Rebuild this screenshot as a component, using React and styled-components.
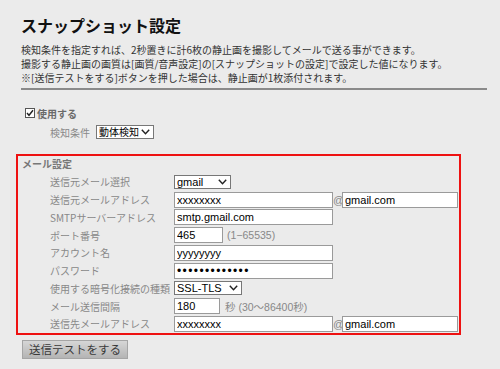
import React from "react";
import styled, { createGlobalStyle } from "styled-components";

const Global = createGlobalStyle`
  html, body { margin: 0; padding: 0; background: #ebebeb; }
  body { font-family: "Noto Sans CJK JP", "Liberation Sans", sans-serif; }
  * { box-sizing: border-box; }
`;

const Page = styled.div`
  width: 500px;
  height: 369px;
  padding: 15px 13px 0 21px;
  overflow: hidden;
`;

const Title = styled.h1`
  margin: 0;
  font-size: 16px;
  line-height: 20px;
  font-weight: 700;
  color: #111;
`;

const Desc = styled.div`
  margin-top: 8px;
  padding-bottom: 3px;
  border-bottom: 2px solid #8a8a8a;
  font-size: 10px;
  line-height: 14px;
  color: #333;
  white-space: nowrap;
`;

const CheckRow = styled.label`
  margin-top: 16px;
  display: flex;
  align-items: center;
  gap: 2px;
  height: 14px;
  padding-left: 4px;
  font-size: 10px;
  font-weight: 700;
  color: #6a6a6a;
`;

const Box = styled.span`
  width: 10px;
  height: 10px;
  border: 1px solid #555;
  background: #fff;
  display: inline-flex;
  align-items: center;
  justify-content: center;
`;

const DetectRow = styled.div`
  margin-top: 4px;
  display: flex;
  align-items: center;
  height: 16px;
  padding-left: 29px;
  gap: 6px;
`;

const Label = styled.span`
  font-size: 10px;
  color: #888;
  white-space: nowrap;
  width: ${(p) => p.$w || "auto"};
  flex: none;
`;

const Section = styled.div`
  margin: 14px 0 0 -5px;
  width: 445px;
  border: 2px solid #ee1111;
  padding: 1px 0 0 4px;
`;

const SectionTitle = styled.div`
  font-size: 10px;
  line-height: 14px;
  font-weight: 700;
  color: #777;
`;

const Rows = styled.div`
  margin-top: 2px;
  display: flex;
  flex-direction: column;
`;

const Row = styled.div`
  height: 17.75px;
  display: flex;
  align-items: center;
  padding-left: 28px;
`;

const Input = styled.input`
  height: 16px;
  width: ${(p) => p.$w}px;
  border: 1px solid #9a9a9a;
  background: #fff;
  padding: 0 2px;
  font-family: "Liberation Sans", Arial, sans-serif;
  font-size: 11px;
  color: #000;
  outline: none;
  flex: none;
  &[type="password"] {
    font-size: 12px;
    letter-spacing: 1.4px;
  }
`;

const SelectWrap = styled.span`
  position: relative;
  display: inline-flex;
  flex: none;
`;

const Select = styled.select`
  appearance: none;
  -webkit-appearance: none;
  height: ${(p) => p.$h || 14}px;
  width: ${(p) => p.$w}px;
  border: 1px solid #777;
  border-radius: 0;
  background: #fff;
  padding: 0 0 0 2px;
  font-family: ${(p) => (p.$cjk ? '"Noto Sans CJK JP", sans-serif' : '"Liberation Sans", Arial, sans-serif')};
  font-size: ${(p) => (p.$cjk ? 10 : 11)}px;
  line-height: 12px;
  color: #000;
  outline: none;
`;

const Chevron = styled.svg`
  position: absolute;
  right: 4px;
  top: 50%;
  transform: translateY(-50%);
  pointer-events: none;
`;

const At = styled.span`
  font-family: "Liberation Sans", Arial, sans-serif;
  font-size: 11px;
  color: #888;
  width: 9px;
  text-align: center;
  flex: none;
`;

const Hint = styled.span`
  margin-left: ${(p) => p.$ml || 4}px;
  font-family: "Liberation Sans", "Noto Sans CJK JP", sans-serif;
  font-size: 10.5px;
  color: #888;
  white-space: nowrap;
`;

const Button = styled.button`
  margin: 3px 0 0 1px;
  width: 106px;
  height: 19px;
  border: 1px solid #a5a5a5;
  border-radius: 0;
  background: linear-gradient(#d6d6d6, #b4b4b4);
  font-family: "Noto Sans CJK JP", sans-serif;
  font-size: 11.5px;
  line-height: 17px;
  color: #3a3a3a;
  padding: 0;
`;

const Dropdown = ({ w, h, cjk, value, options }) => (
  <SelectWrap>
    <Select $w={w} $h={h} $cjk={cjk} defaultValue={value}>
      {options.map((o) => (
        <option key={o}>{o}</option>
      ))}
    </Select>
    <Chevron width="9" height="6" viewBox="0 0 9 6">
      <path d="M0.8 0.8 L4.5 4.8 L8.2 0.8" fill="none" stroke="#222" strokeWidth="1.4" />
    </Chevron>
  </SelectWrap>
);

export default function App() {
  return (
    <Page>
      <Global />
      <Title>スナップショット設定</Title>
      <Desc>
        <div>検知条件を指定すれば、2秒置きに計6枚の静止画を撮影してメールで送る事ができます。</div>
        <div>撮影する静止画の画質は[画質/音声設定]の[スナップショットの設定]で設定した値になります。</div>
        <div>※[送信テストをする]ボタンを押した場合は、静止画が1枚添付されます。</div>
      </Desc>
      <CheckRow>
        <Box>
          <svg width="8" height="8" viewBox="0 0 8 8">
            <path d="M1 4 L3 6.3 L7 1.2" fill="none" stroke="#222" strokeWidth="1.4" />
          </svg>
        </Box>
        使用する
      </CheckRow>
      <DetectRow>
        <Label>検知条件</Label>
        <Dropdown w={58} h={14} cjk value="動体検知" options={["動体検知"]} />
      </DetectRow>
      <Section>
        <SectionTitle>メール設定</SectionTitle>
        <Rows>
          <Row>
            <Label $w="124px">送信元メール選択</Label>
            <Dropdown w={57} value="gmail" options={["gmail"]} />
          </Row>
          <Row>
            <Label $w="124px">送信元メールアドレス</Label>
            <Input $w={159} defaultValue="xxxxxxxx" />
            <At>@</At>
            <Input $w={116} defaultValue="gmail.com" />
          </Row>
          <Row>
            <Label $w="124px">SMTPサーバーアドレス</Label>
            <Input $w={159} defaultValue="smtp.gmail.com" />
          </Row>
          <Row>
            <Label $w="124px">ポート番号</Label>
            <Input $w={49} defaultValue="465" />
            <Hint>(1−65535)</Hint>
          </Row>
          <Row>
            <Label $w="124px">アカウント名</Label>
            <Input $w={159} defaultValue="yyyyyyyy" />
          </Row>
          <Row>
            <Label $w="124px">パスワード</Label>
            <Input $w={159} type="password" defaultValue="aaaaaaaaaaaaa" />
          </Row>
          <Row>
            <Label $w="124px">使用する暗号化接続の種類</Label>
            <Dropdown w={68} value="SSL-TLS" options={["SSL-TLS"]} />
          </Row>
          <Row>
            <Label $w="124px">メール送信間隔</Label>
            <Input $w={46} defaultValue="180" />
            <Hint $ml={5}>秒 (30～86400秒)</Hint>
          </Row>
          <Row>
            <Label $w="124px">送信先メールアドレス</Label>
            <Input $w={159} defaultValue="xxxxxxxx" />
            <At>@</At>
            <Input $w={116} defaultValue="gmail.com" />
          </Row>
        </Rows>
      </Section>
      <Button>送信テストをする</Button>
    </Page>
  );
}
